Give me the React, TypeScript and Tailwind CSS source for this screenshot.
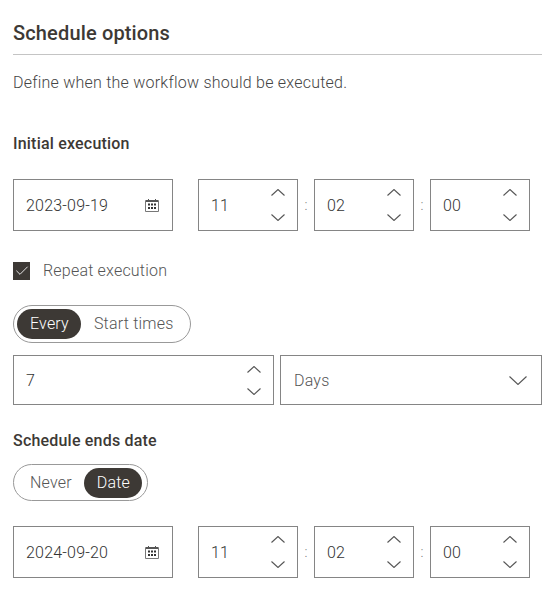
import { Check } from "lucide-react"

function CalendarIcon() {
  return (
    <svg width="15" height="13" viewBox="0 0 15 13" className="shrink-0" fill="none">
      <path d="M0.500 1.500h13v11h-13z" stroke="#777" />
      <path d="M1 1h12v2H1z" fill="#555" />
      <path d="M3 0h1v2H3zM10 0h1v2h-1z" fill="#555" />
      <path d="M3 4.500h2v2H3zM6 4.500h2v2H6zM9 4.500h2v2H9zM3 8h2v2H3zM6 8h2v2H6zM9 8h2v2H9z" fill="#333" />
    </svg>
  )
}

function Chevron({ up, w = 14, h = 7 }: { up?: boolean; w?: number; h?: number }) {
  const d = up ? `M0.500 ${h - 0.5}L${w / 2} 0.500L${w - 0.5} ${h - 0.5}` : `M0.500 0.500L${w / 2} ${h - 0.5}L${w - 0.5} 0.500`
  return (
    <svg width={w} height={h} viewBox={`0 0 ${w} ${h}`} fill="none" className="block shrink-0">
      <path d={d} stroke="#555" strokeWidth="1.100" />
    </svg>
  )
}

function DateField({ value }: { value: string }) {
  return (
    <div className="flex h-[52px] w-[160px] items-center justify-between border border-[#858585] px-[12px] text-[16px] font-light tracking-[0.2px] text-[#333]">
      <span className="pt-[2px]">{value}</span>
      <CalendarIcon />
    </div>
  )
}

function TimeField({ value }: { value: string }) {
  return (
    <div className="flex h-[52px] w-[100px] items-center justify-between border border-[#858585] pl-[12px] pr-[12px] text-[16px] font-light tracking-[0.2px] text-[#333]">
      <span className="pt-[2px]">{value}</span>
      <div className="flex flex-col gap-[18px]">
        <Chevron up />
        <Chevron />
      </div>
    </div>
  )
}

function Colon() {
  return <span className="flex w-[16px] justify-center text-[14px] font-light text-[#777]">:</span>
}

function DateTimeRow({ date }: { date: string }) {
  return (
    <div className="flex items-center">
      <DateField value={date} />
      <div className="ml-[25px] flex items-center">
        <TimeField value="11" />
        <Colon />
        <TimeField value="02" />
        <Colon />
        <TimeField value="00" />
      </div>
    </div>
  )
}

function Segmented({ options, active, className }: { options: string[]; active: string; className: string }) {
  return (
    <div className={`flex items-center rounded-full border border-[#999] px-[3px] ${className}`}>
      {options.map((o) =>
        o === active ? (
          <span key={o} className="flex h-[30px] items-center whitespace-nowrap rounded-full bg-[#3d3935] pl-[13px] pr-[12px] text-[16px] font-light tracking-[0.2px] text-white">
            {o}
          </span>
        ) : (
          <span key={o} className="flex h-[30px] items-center whitespace-nowrap pl-[13px] pr-[12px] text-[16px] font-light tracking-[0.2px] text-[#555]">
            {o}
          </span>
        )
      )}
    </div>
  )
}

export default function App() {
  return (
    <div className="h-[603px] w-[557px] bg-white pl-[13px] pr-[15px] font-['Roboto',sans-serif] text-[#3d3935]">
      <h2 className="flex h-[55px] items-center border-b border-[#c4c4c4] pt-[11px] text-[20px] font-medium leading-none tracking-[0.15px]">
        Schedule options
      </h2>
      <p className="mt-[18px] text-[16px] font-light leading-[20px] tracking-[0.23px] text-[#444]">Define when the workflow should be executed.</p>

      <h3 className="mt-[41px] text-[16px] font-medium leading-[20px] tracking-[0.2px]">Initial execution</h3>
      <div className="mt-[25px]">
        <DateTimeRow date="2023-09-19" />
      </div>

      <label className="mt-[30px] flex items-center">
        <span className="flex h-[18px] w-[17px] items-center justify-center bg-[#3d3935]">
          <Check size={16} strokeWidth={1.3} className="text-white" />
        </span>
        <span className="ml-[13px] text-[16px] font-light leading-[20px] tracking-[0.2px] text-[#555]">Repeat execution</span>
      </label>

      <Segmented options={["Every", "Start times"]} active="Every" className="mt-[24px] h-[38px] w-[178px]" />

      <div className="mt-[12px] flex h-[50px] gap-[6px]">
        <div className="flex w-[261px] items-center justify-between border border-[#858585] pl-[12px] pr-[12px] text-[16px] font-light text-[#333]">
          <span className="pt-[2px]">7</span>
          <div className="flex flex-col gap-[15px]">
            <Chevron up />
            <Chevron />
          </div>
        </div>
        <div className="flex flex-1 items-center justify-between border border-[#858585] pl-[13px] pr-[14px] text-[16px] font-light tracking-[0.2px] text-[#555]">
          <span className="pt-[2px]">Days</span>
          <Chevron w={18} h={9} />
        </div>
      </div>

      <h3 className="mt-[26px] text-[16px] font-medium leading-[20px] tracking-[0.2px]">Schedule ends date</h3>
      <Segmented options={["Never", "Date"]} active="Date" className="mt-[13px] h-[37px] w-[135px]" />
      <div className="mt-[25px]">
        <DateTimeRow date="2024-09-20" />
      </div>
    </div>
  )
}
